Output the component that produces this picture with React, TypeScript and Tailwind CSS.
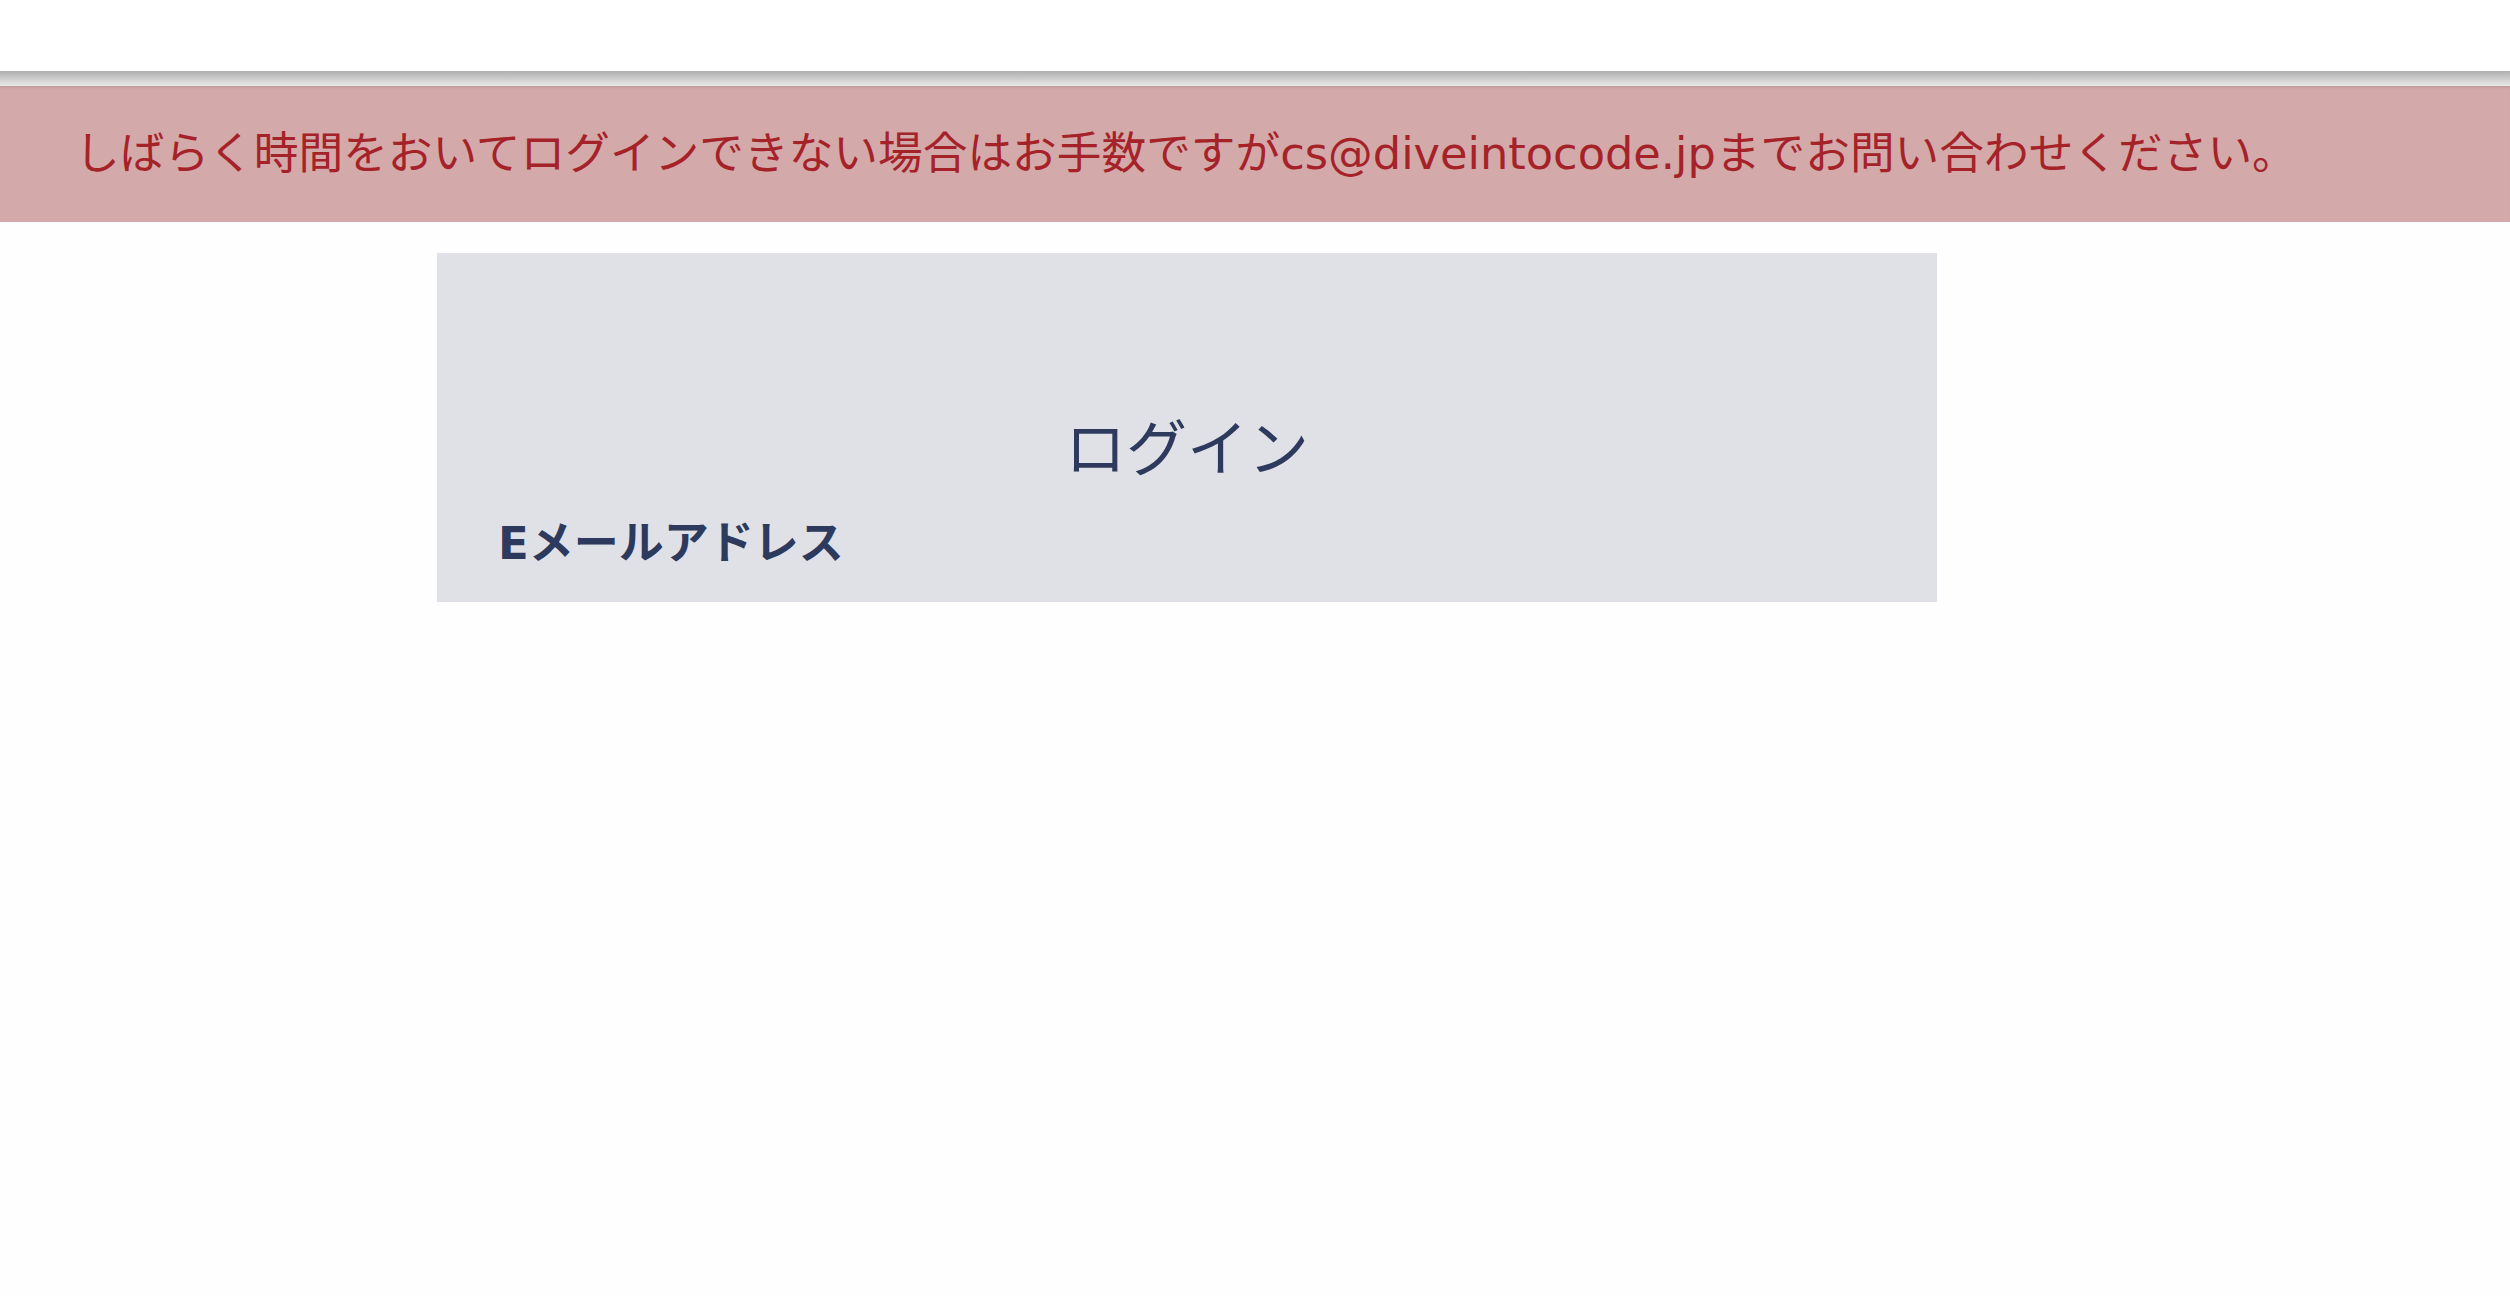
import React from "react";

export default function App() {
  return (
    <div className="min-h-[1296px] w-full bg-[#fefefe]">
      <div className="h-[71px] bg-white" />
      <div className="h-[15px] bg-gradient-to-b from-[#b0b0b0] to-[#e8e8e8]" />
      <div
        className="flex h-[136px] items-center bg-[#d4a9aa] pl-[75px] shadow-[inset_0_3px_3px_-2px_rgba(0,0,0,0.12)]"
        style={{ fontFamily: '"DejaVu Sans", "Noto Sans CJK JP", sans-serif' }}
      >
        <p className="text-[44.7px] leading-[1.2] text-[#a52229] pt-[2px]">
          しばらく時間をおいてログインできない場合はお手数ですがcs@diveintocode.jpまでお問い合わせください。
        </p>
      </div>
      <div className="pt-[31px]">
        <div
          className="ml-[437px] h-[349px] w-[1500px] overflow-hidden bg-[#e0e1e6] pt-[161px]"
          style={{ fontFamily: '"DejaVu Sans", "Noto Sans CJK JP", sans-serif' }}
        >
          <h1 className="text-center text-[61px] font-normal leading-[72px] text-[#2d3a5e]">
            ログイン
          </h1>
          <label className="mt-[31px] block pl-[61px] text-[45px] font-bold leading-[54px] text-[#2d3a5e]">
            Eメールアドレス
          </label>
        </div>
      </div>
    </div>
  );
}
